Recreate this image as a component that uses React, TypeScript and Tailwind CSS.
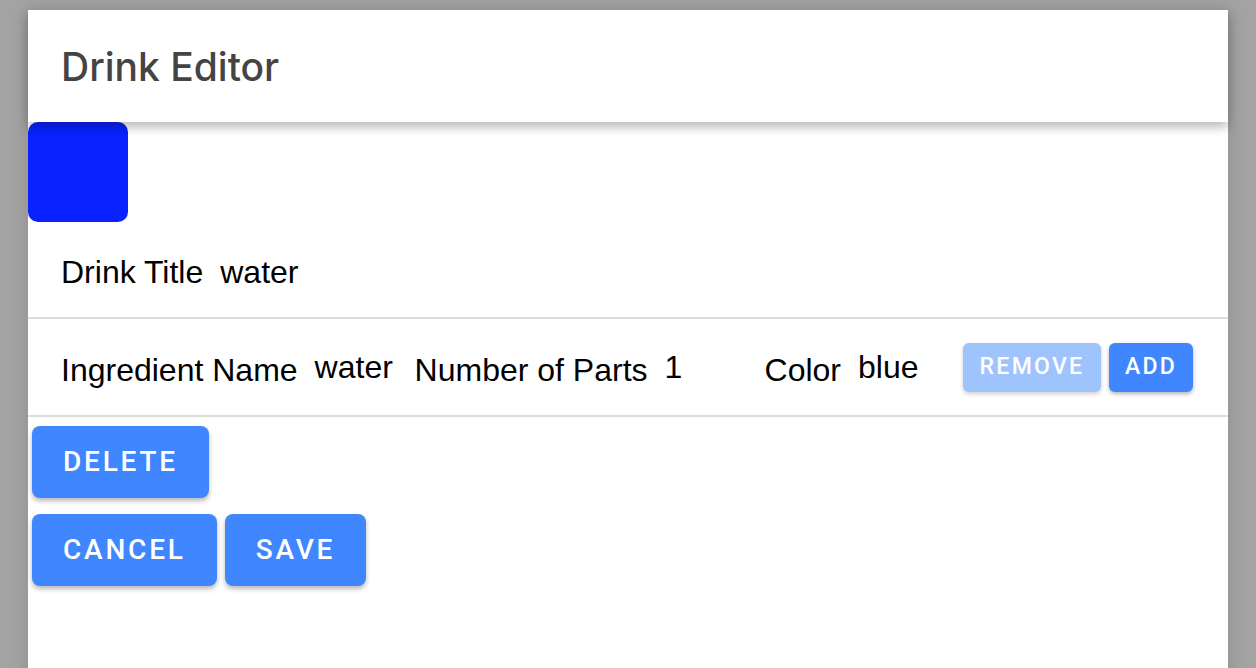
import React from 'react'

const sans = { fontFamily: '"Liberation Sans", Arial, sans-serif' }
const ui = { fontFamily: 'Roboto, "Noto Sans", sans-serif' }

function Field({ label, value, last }: { label: string; value: string; last?: boolean }) {
  return (
    <>
      <span className="mr-[17px]">{label}</span>
      <span className={`w-[83px] pb-[6px] ${last ? 'mr-[22px]' : 'mr-[17px]'}`}>{value}</span>
    </>
  )
}

function Btn({ children, className = '' }: { children: React.ReactNode; className?: string }) {
  return (
    <button
      className={`h-[72px] px-[31px] rounded-[8px] bg-[#3f86ff] text-white text-[28px] font-medium tracking-[0.1em] shadow-[0_3px_5px_rgba(0,0,0,0.28)] ${className}`}
      style={ui}
    >
      {children}
    </button>
  )
}

export default function App() {
  return (
    <div className="h-[668px] overflow-hidden bg-[#a3a3a3] px-[28px] pt-[10px]">
      <div className="h-[700px] bg-white rounded-t-[3px] shadow-[0_0_20px_rgba(0,0,0,0.12)]">
        {/* Header */}
        <div className="relative z-10 h-[112px] flex items-center pl-[33px] pt-[3px] bg-white shadow-[0_5px_10px_rgba(0,0,0,0.28)]">
          <h1 className="text-[39px] font-medium text-[#444]" style={{ fontFamily: 'Inter, Roboto, sans-serif' }}>
            Drink Editor
          </h1>
        </div>

        {/* Drink color swatch */}
        <div className="w-[100px] h-[100px] rounded-[10px] bg-[#0a22ff]" />

        {/* Title row */}
        <div className="h-[97px] flex items-center pl-[33px] pt-[4px] text-[32px] text-black border-b-2 border-[#dcdcdc]" style={sans}>
          <span className="mr-[17px]">Drink Title</span>
          <span>water</span>
        </div>

        {/* Ingredient row */}
        <div className="h-[98px] flex items-center pl-[33px] pt-[6px] text-[32px] text-black border-b-2 border-[#dcdcdc]" style={sans}>
          <Field label="Ingredient Name" value="water" />
          <Field label="Number of Parts" value="1" />
          <Field label="Color" value="blue" last />
          <div className="flex gap-[8px] mb-[6px]" style={ui}>
            <button className="h-[49px] w-[138px] rounded-[6px] bg-[#9fc3fd] text-white text-[23px] font-medium tracking-[0.1em] shadow-[0_2px_4px_rgba(0,0,0,0.2)]">
              REMOVE
            </button>
            <button className="h-[49px] w-[84px] rounded-[6px] bg-[#3f86ff] text-white text-[23px] font-medium tracking-[0.1em] shadow-[0_2px_4px_rgba(0,0,0,0.3)]">
              ADD
            </button>
          </div>
        </div>

        {/* Actions */}
        <div className="flex flex-col gap-[16px] pl-[4px] pt-[9px]">
          <div>
            <Btn>DELETE</Btn>
          </div>
          <div className="flex gap-[8px]">
            <Btn>CANCEL</Btn>
            <Btn>SAVE</Btn>
          </div>
        </div>
      </div>
    </div>
  )
}
